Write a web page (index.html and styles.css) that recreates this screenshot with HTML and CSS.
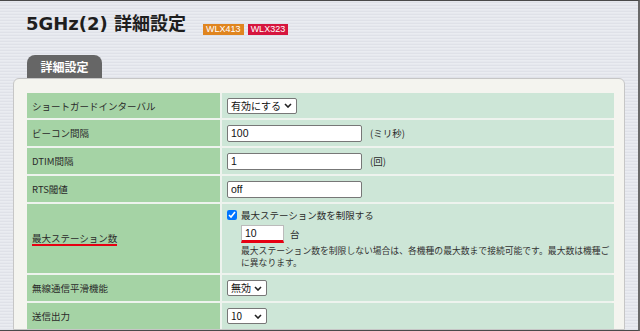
FILE: index.html
```html
<!DOCTYPE html>
<html lang="ja">
<head>
    <meta charset="UTF-8">
    <title>5GHz(2) 詳細設定</title>
    <link rel="stylesheet" href="styles.css">
</head>
<body>
<div class="frame">
    <!-- Page title -->
    <div class="header">
        <h1>5GHz(2) 詳細設定</h1>
        <div class="badges">
            <span class="badge badge-orange">WLX413</span>
            <span class="badge badge-red">WLX323</span>
        </div>
    </div>

    <!-- Settings -->
    <div class="section">
        <div class="tab">詳細設定</div>
        <div class="panel">
            <div class="settings">
                <div class="label first">ショートガードインターバル</div>
                <div class="value first">
                    <select class="sel sel-wide"><option>有効にする</option></select>
                </div>

                <div class="label">ビーコン間隔</div>
                <div class="value">
                    <input type="text" class="txt" value="100">
                    <span class="unit">(ミリ秒)</span>
                </div>

                <div class="label">DTIM間隔</div>
                <div class="value">
                    <input type="text" class="txt" value="1">
                    <span class="unit">(回)</span>
                </div>

                <div class="label">RTS閾値</div>
                <div class="value">
                    <input type="text" class="txt" value="off">
                </div>

                <div class="label"><span class="marked">最大ステーション数</span></div>
                <div class="value value-block">
                    <label class="check">
                        <input type="checkbox" checked>
                        <span>最大ステーション数を制限する</span>
                    </label>
                    <div class="indent">
                        <div class="count">
                            <input type="text" class="txt txt-short" value="10">
                            <span>台</span>
                        </div>
                        <p class="note">最大ステーション数を制限しない場合は、各機種の最大数まで接続可能です。最大数は機種ご<br>に異なります。</p>
                    </div>
                </div>

                <div class="label">無線通信平滑機能</div>
                <div class="value">
                    <select class="sel sel-narrow"><option>無効</option></select>
                </div>

                <div class="label">送信出力</div>
                <div class="value">
                    <select class="sel sel-narrow"><option>10</option></select>
                </div>
            </div>
        </div>
    </div>
</div>
</body>
</html>
```

FILE: styles.css
```css
/* Reset */
* {
    margin: 0;
    padding: 0;
    box-sizing: border-box;
}

html, body {
    overflow: hidden;
}

body {
    font-family: "Noto Sans CJK JP", sans-serif;
    color: #222;
}

/* Window frame with striped background */
.frame {
    width: 640px;
    height: 331px;
    overflow: hidden;
    border-top: 1px solid #4a4a4a;
    border-right: 2px solid #6a6a6a;
    border-bottom: 1px solid #4a4a4a;
    background: repeating-linear-gradient(
        to bottom,
        #e6e8ee 0, #e6e8ee 1px,
        #dfe1e8 1px, #dfe1e8 2px,
        #eaecf1 2px, #eaecf1 3px
    );
}

/* Header */
.header {
    display: flex;
    align-items: flex-start;
    height: 54px;
    padding: 9px 0 0 26px;
}

h1 {
    font-family: "DejaVu Sans", "Noto Sans CJK JP", sans-serif;
    font-size: 18px;
    line-height: 28px;
    font-weight: bold;
    color: #1e1e1e;
}

.badges {
    display: flex;
    gap: 4px;
    margin: 14px 0 0 17px;
}

.badge {
    height: 11px;
    padding: 0 3px;
    font-family: "Liberation Sans", Arial, sans-serif;
    font-size: 9px;
    line-height: 11px;
    color: #fff;
}

.badge-orange {
    background-color: #e0851f;
}

.badge-red {
    background-color: #d6163e;
}

/* Tab + panel */
.section {
    width: 612px;
    margin-left: 13px;
}

.tab {
    width: 75px;
    height: 23px;
    margin-left: 14px;
    background-color: #666;
    color: #fff;
    border-radius: 8px 8px 0 0;
    font-size: 12px;
    font-weight: bold;
    line-height: 23px;
    text-align: center;
}

.panel {
    background-color: #f4f4ef;
    border: 1px solid #c6c6c6;
    border-radius: 6px 6px 0 0;
    padding: 14px 12px 0 13px;
}

/* Settings table */
.settings {
    display: grid;
    grid-template-columns: 193px 1fr;
    gap: 2px;
    background-color: #eef3ee;
}

.label {
    display: flex;
    align-items: center;
    min-height: 26px;
    padding-left: 5px;
    background-color: #a5d3a5;
    font-size: 9.5px;
    color: #2a2a2a;
}

.value {
    display: flex;
    align-items: center;
    gap: 8px;
    min-height: 26px;
    padding-left: 5px;
    background-color: #cde6d7;
    font-size: 9.5px;
    color: #2a2a2a;
}

.label.first,
.value.first {
    min-height: 25px;
}

.marked {
    display: inline-block;
    line-height: 12px;
    border-bottom: 2px solid #e60012;
}

/* Form controls */
.txt {
    width: 135px;
    height: 17px;
    padding: 0 3px;
    border: 1px solid #777;
    border-radius: 2px;
    background-color: #fff;
    font-family: "Liberation Sans", Arial, sans-serif;
    font-size: 10.5px;
    color: #111;
}

.sel {
    appearance: none;
    -webkit-appearance: none;
    height: 16px;
    padding: 0 13px 0 3px;
    border: 1px solid #777;
    border-radius: 2px;
    background: #fff url("data:image/svg+xml,%3Csvg xmlns='http://www.w3.org/2000/svg' width='8' height='5' viewBox='0 0 8 5'%3E%3Cpath d='M1 1l3 3 3-3' fill='none' stroke='%23222' stroke-width='1.6'/%3E%3C/svg%3E") no-repeat right 4px center;
    font-family: "Noto Sans CJK JP", sans-serif;
    font-size: 10px;
    line-height: 14px;
    color: #111;
}

.sel-wide {
    width: 70px;
}

.sel-narrow {
    width: 40px;
}

.unit {
    font-size: 9.5px;
}

/* Max station block */
.value-block {
    display: block;
    padding: 5px;
}

.check {
    display: flex;
    align-items: center;
    gap: 4px;
    height: 12px;
}

.check input {
    width: 10px;
    height: 10px;
    margin: 0;
    accent-color: #0075ff;
}

.indent {
    padding-left: 14px;
}

.count {
    display: flex;
    align-items: center;
    gap: 6px;
    margin-top: 4px;
}

.txt-short {
    width: 43px;
    height: 18px;
    border-color: #bbb;
    border-bottom: 3px solid #e60012;
    border-radius: 0;
}

.note {
    margin-top: 2px;
    font-size: 8.8px;
    line-height: 11.5px;
    white-space: nowrap;
    color: #333;
}
```
